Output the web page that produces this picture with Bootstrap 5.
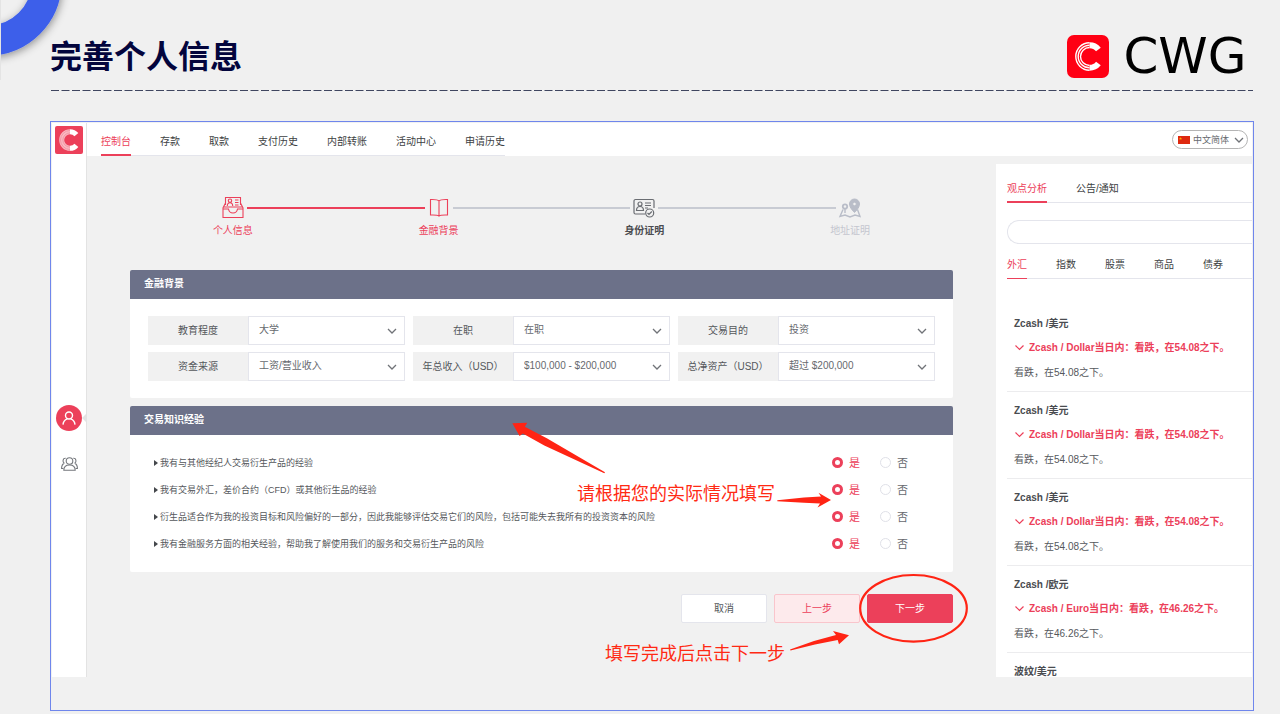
<!DOCTYPE html>
<html lang="zh-CN">
<head>
<meta charset="utf-8">
<meta name="viewport" content="width=device-width, initial-scale=1">
<title>完善个人信息</title>
<link href="https://cdn.jsdelivr.net/npm/bootstrap@5.3.0/dist/css/bootstrap.min.css" rel="stylesheet">
<style>
  :root { --brand: #ec405a; --slate: #6c7189; --rule: #e4e5ec; --ink: #55585c; }
  body { background: #f0f0f0; color: var(--ink); font: 10px/14px "Liberation Sans", "Noto Sans CJK SC", sans-serif; overflow-x: hidden; }
  a { color: inherit; text-decoration: none; }
  svg { display: block; flex: none; }

  /* slide header */
  .corner-ring { position: absolute; left: 0; top: 0; }
  .slide-head { padding: 32px 27px 0 50px; }
  .slide-title { font-size: 32px; line-height: 50px; font-weight: 700; color: #03053d; margin: 0; }
  .wordmark { font: 50px/48px "DejaVu Sans", sans-serif; color: #000; min-width: 136px; text-align: center; }
  .dash-rule { margin: 8px 27px 0 51px; width: calc(100% - 78px); }

  /* framed application */
  .frame { margin: 30px 26px 2px 50px; border: 1px solid #6f86ec; padding: 1px 1px 33px; background: #f1f1f1; }
  .side-rail { flex: 0 0 35px; background: #fff; border-right: 1px solid #e3e3e3; padding-top: 3px; }
  .rail-user { position: relative; width: 26px; height: 26px; border-radius: 50%; background: var(--brand); margin-top: 251px; }
  .rail-notch { position: absolute; right: -5px; top: 8px; }
  .rail-team { margin-top: 26px; }
  .top-bar { background: #fff; height: 33px; padding: 0 4px 0 14px; }

  .tab-strip { gap: 29px; border-bottom: 1px solid var(--rule); }
  .tab-strip a { display: block; color: #3d3f43; white-space: nowrap; }
  .tab-strip a.active { color: var(--brand); border-bottom: 2px solid var(--brand); margin-bottom: -1px; }
  .tabs-main a { padding: 12px 0 5px; }
  .tabs-news a { padding: 18px 0 5px; }
  .tabs-market a { padding: 14px 0 6px; }
  .tabs-market a.active { border-bottom-width: 1px; }

  .lang { border: 1px solid #b5b5b5; border-radius: 10px; height: 19px; padding: 0 3px 0 5px; margin-top: 7px; }
  .form-select { background-image: url("data:image/svg+xml,%3Csvg xmlns='http://www.w3.org/2000/svg' viewBox='0 0 10 10'%3E%3Cpath fill='none' stroke='%23707378' stroke-width='1.3' d='M1 3l4 4 4-4'/%3E%3C/svg%3E"); background-size: 10px 10px; border-radius: 0; box-shadow: none; font-size: 10px; line-height: 14px; color: #66696e; }
  .lang .form-select { border: 0; padding: 0 11px 0 3px; font-size: 9px; background-position: right 0 center; background-color: transparent; width: 54px; min-height: 0; }

  .main-col { padding: 0 43px 0; }

  /* steps */
  .steps { padding: 39px 0 0; }
  .step-row { margin-bottom: 3px; }
  .step-line { height: 2px; background: #c8cbd3; }
  .step-line.done { background: var(--brand); }
  .step-line.none { background: none; }
  .step-icon { width: 28px; height: 26px; }
  .step-on { color: var(--brand); }
  .step-now { color: #4a4c50; }
  .step-off { color: #c4c6cf; }

  /* panels */
  .panel-first { padding-top: 32px; }
  .panel-head { background: var(--slate); color: #fff; font-weight: 700; font-size: 10px; line-height: 15px; padding: 6px 14px 8px; margin: 0; border-radius: 2px 2px 0 0; }
  .panel-box { background: #fff; border-radius: 0 0 2px 2px; }
  .fields { display: grid; grid-template-columns: repeat(3, 1fr); gap: 7px 8px; padding: 17px 18px; }
  .field-name { flex: 0 0 100px; background: #f1f1f1; height: 29px; }
  .fields .form-select { height: 29px; padding: 0 24px 1px 10px; border: 1px solid var(--rule); background-position: right 7px center; }

  .questions { padding: 14px 45px 15px 24px; list-style: none; margin: 0; }
  .questions li { height: 27px; font-size: 9px; }
  .tri { width: 0; height: 0; border: solid transparent; border-width: 3px 0 3px 4px; border-left-color: #44474b; margin-right: 2px; flex: none; }
  .choice { gap: 6px; font-size: 11px; color: #66696e; }
  .choice .form-check-input { width: 11px; height: 11px; margin: 0; border: 1px solid #e0e1e8; background-color: #fff; box-shadow: none; }
  .choice .form-check-input:checked { border: 3px solid var(--brand); background: #fff; }
  .choice .form-check-input:checked + span { color: var(--brand); }

  .actions { gap: 7px; margin-top: 22px; }
  .actions .btn { width: 86px; height: 29px; padding: 0; font-size: 10px; line-height: 14px; border-radius: 2px; }
  .btn-cancel { background: #fff; border-color: var(--rule); color: #55585c; }
  .btn-prev { background: #fdeaec; border-color: #f9c5cc; color: var(--brand); }
  .btn-next, .btn-next:hover { background: var(--brand); border-color: var(--brand); color: #fff; }

  /* red notes laid over the form */
  .marks { position: absolute; right: -20px; top: 0; pointer-events: none; }
  .note { position: absolute; margin: 0; color: #ff2a14; font-size: 18px; line-height: 24px; white-space: nowrap; }
  .note-fill { right: 178px; top: 76px; }
  .note-done { right: 168px; top: 236px; }

  /* news column */
  .news { flex: 0 0 256px; background: #fff; margin-top: 8px; padding-left: 11px; }
  .search { height: 24px; border: 1px solid var(--rule); border-right: 0; margin-top: 17px; border-radius: 12px 0 0 12px; padding: 0 12px; font-size: 10px; box-shadow: none; }
  .news-list { max-height: 398px; overflow: hidden; padding: 26px 0 0; margin: 0; list-style: none; }
  .news-list li { height: 87px; padding: 12px 0 0 7px; border-bottom: 1px solid #ececee; }
  .news-list li:last-child { border: 0; }
  .news-list h3 { font-size: 10px; line-height: 14px; font-weight: 700; margin: 0 0 10px; color: #4a4c50; }
  .news-list .signal { font-weight: 700; color: var(--brand); margin: 0 0 11px; gap: 4px; white-space: nowrap; }
  .news-list p { margin: 0; }
</style>
</head>
<body>
<svg class="corner-ring" width="90" height="80" viewBox="0 0 90 80" aria-hidden="true">
  <defs><filter id="soft" x="-30%" y="-30%" width="160%" height="160%"><feDropShadow dx="1" dy="2" stdDeviation="4" flood-color="#000" flood-opacity=".4"/></filter></defs>
  <circle cx="-12" cy="-18" r="58.5" fill="none" stroke="#3c5eea" stroke-width="30" filter="url(#soft)"/>
  <path d="M.5 0v80" stroke="#e4e4e4"/>
</svg>

<header class="slide-head d-flex justify-content-between align-items-start">
  <h1 class="slide-title">完善个人信息</h1>
  <div class="d-flex align-items-center gap-2">
    <svg width="42" height="43" viewBox="0 0 42 43" role="img" aria-label="CWG">
      <rect width="42" height="43" rx="7" fill="#ff0014"/>
      <g fill="none" stroke="#fff">
        <path d="M22.500 7.800a13.700 13.700 0 0 0 0 27.400M22.500 10.200a11.300 11.300 0 0 0 0 22.600M22.500 12.500a9 9 0 0 0 0 18" stroke-width="1.400"/>
        <path d="M22.500 10.200a11.300 11.300 0 0 1 8.900 4.300M22.500 32.800a11.300 11.300 0 0 0 8.900-4.300" stroke-width="6"/>
      </g>
    </svg>
    <span class="wordmark">CWG</span>
  </div>
</header>
<svg class="dash-rule" height="1" aria-hidden="true"><line x1="0" y1=".5" x2="100%" y2=".5" stroke="#3f4660" stroke-width="1" stroke-dasharray="8 2.500"/></svg>

<div class="frame">
  <div class="d-flex">
    <aside class="side-rail d-flex flex-column align-items-center">
      <a href="#" aria-label="首页"><svg width="28" height="28" viewBox="0 0 28 28">
        <rect width="28" height="28" rx="2" fill="#ec405a"/>
        <g fill="none"><path d="M15 5.700a8.300 8.300 0 0 0 0 16.600" stroke="#f9b9c2" stroke-width="5"/>
        <path d="M15 4.500a9.500 9.500 0 0 0 0 19M15 6.900a7.100 7.100 0 0 0 0 14.200" stroke="#f08796" stroke-width=".7"/>
        <path d="M15 5.700a8.300 8.300 0 0 1 6.400 3M15 22.300a8.300 8.300 0 0 0 6.400-3" stroke="#fff" stroke-width="5"/></g>
      </svg></a>
      <a href="#" class="rail-user d-flex align-items-center justify-content-center" aria-label="个人">
        <svg width="14" height="14" viewBox="0 0 14 14" fill="none" stroke="#fff" stroke-width="1.400"><circle cx="7" cy="4.500" r="3.500"/><path d="M1 13.600c.2-3.400 2-5 4.300-5.800M13 13.600c-.2-3.400-2-5-4.300-5.800"/></svg>
        <svg class="rail-notch" width="5" height="10" viewBox="0 0 5 10"><path d="M5 0L0 5l5 5z" fill="#e3e3e3"/></svg>
      </a>
      <a href="#" class="rail-team" aria-label="团队">
        <svg width="17" height="14" viewBox="0 0 17 14" fill="none" stroke="#74777c" stroke-width="1.100"><circle cx="8.500" cy="4" r="3.300"/><path d="M2.800 13.300c0-3.500 2-5.300 5.700-5.300s5.700 1.800 5.700 5.300z"/><path d="M4.700 1.200c-3-.3-3.500 3.600-1.400 5M12.300 1.200c3-.3 3.500 3.600 1.400 5M3.300 6.300C1.500 7 .6 8.800.6 11.500h1.800M13.700 6.300c1.800.7 2.700 2.500 2.700 5.200h-1.800"/></svg>
      </a>
    </aside>

    <div class="flex-grow-1">
      <div class="top-bar d-flex justify-content-between align-items-start">
        <nav class="tab-strip tabs-main d-flex" aria-label="主导航">
          <a href="#" class="active">控制台</a><a href="#">存款</a><a href="#">取款</a><a href="#">支付历史</a><a href="#">内部转账</a><a href="#">活动中心</a><a href="#">申请历史</a>
        </nav>
        <label class="lang d-flex align-items-center">
          <svg width="12" height="8" viewBox="0 0 12 8"><path fill="#de2910" d="M0 0h12v8H0z"/><path fill="#ffb000" d="M2.500 1l.4 1.100h1.200l-1 .7.4 1.200-1-.7-1 .7.400-1.200-1-.7h1.200z"/></svg>
          <select class="form-select" aria-label="语言"><option>中文简体</option></select>
        </label>
      </div>

      <div class="d-flex align-items-start">
        <main class="main-col flex-grow-1">
          <ol class="steps list-unstyled d-flex mb-0 text-center">
            <li class="col step-on">
              <div class="step-row d-flex align-items-center">
                <span class="step-line none flex-fill"></span>
                <svg class="step-icon" viewBox="0 0 28 26" fill="none" stroke="currentColor" stroke-width="1.100"><path d="M6.500 10V2.500h15V10M6.500 8L4 13v9.500h20V13l-2.500-5M4 14h5.500c.5 3 1.500 4 4.500 4s4-1 4.500-4H24M4.500 12h19"/><circle cx="11" cy="5.700" r="1.700"/><path d="M8.300 11c0-2 1-3.300 2.700-3.300s2.700 1.300 2.700 3.300M16 5h3.500M16 7.500h3.500M16 10h3.500"/></svg>
                <span class="step-line done flex-fill"></span>
              </div>个人信息
            </li>
            <li class="col step-on">
              <div class="step-row d-flex align-items-center">
                <span class="step-line done flex-fill"></span>
                <svg class="step-icon" viewBox="0 0 28 26" fill="none" stroke="currentColor" stroke-width="1.100"><path d="M14 21V6c-1-1.200-3-1.700-8.500-1.500V20c5-.2 7.300 0 8.500 1 1.200-1 3.500-1.200 8.500-1V4.500C17 4.300 15 4.800 14 6"/></svg>
                <span class="step-line flex-fill"></span>
              </div>金融背景
            </li>
            <li class="col fw-bold step-now">
              <div class="step-row d-flex align-items-center">
                <span class="step-line flex-fill"></span>
                <svg class="step-icon" viewBox="0 0 28 26" fill="none" stroke="#6a6d72" stroke-width="1.200"><path d="M15 19H5.500a1.500 1.500 0 0 1-1.500-1.500V6a1.500 1.500 0 0 1 1.500-1.500h17A1.500 1.500 0 0 1 24 6v7M15 8h6M15 10.500h6M15 13h3"/><circle cx="10" cy="9" r="2"/><path d="M6.500 15.500c0-2.500 1.500-4 3.500-4s3.500 1.500 3.500 4zM17.500 18l1.500 1.500 2.800-3"/><circle cx="19.700" cy="18" r="4"/></svg>
                <span class="step-line flex-fill"></span>
              </div>身份证明
            </li>
            <li class="col step-off">
              <div class="step-row d-flex align-items-center">
                <span class="step-line flex-fill"></span>
                <svg class="step-icon" viewBox="0 0 28 26" fill="none" stroke="#b9bdc8"><path d="M18.500 17.500s-5-4.500-5-8.500a5 5 0 0 1 10 0c0 4-5 8.500-5 8.500z" fill="#b9bdc8"/><circle cx="18.500" cy="9" r="1.800" fill="#f1f1f1"/><circle cx="9" cy="11.500" r="2.200" stroke-width="1.800"/><path d="M9 14v4M7 14.500l-3 7 5-1.500 5 2 5-2 5 1.500-2.500-7" stroke-width="1.400"/></svg>
                <span class="step-line none flex-fill"></span>
              </div>地址证明
            </li>
          </ol>

          <section class="panel-first">
            <h2 class="panel-head">金融背景</h2>
            <div class="panel-box fields">
              <label class="d-flex"><span class="field-name d-flex align-items-center justify-content-center">教育程度</span><select class="form-select"><option>大学</option></select></label>
              <label class="d-flex"><span class="field-name d-flex align-items-center justify-content-center">在职</span><select class="form-select"><option>在职</option></select></label>
              <label class="d-flex"><span class="field-name d-flex align-items-center justify-content-center">交易目的</span><select class="form-select"><option>投资</option></select></label>
              <label class="d-flex"><span class="field-name d-flex align-items-center justify-content-center">资金来源</span><select class="form-select"><option>工资/营业收入</option></select></label>
              <label class="d-flex"><span class="field-name d-flex align-items-center justify-content-center">年总收入（USD）</span><select class="form-select"><option>$100,000 - $200,000</option></select></label>
              <label class="d-flex"><span class="field-name d-flex align-items-center justify-content-center">总净资产（USD）</span><select class="form-select"><option>超过 $200,000</option></select></label>
            </div>
          </section>

          <section class="position-relative mt-2">
            <h2 class="panel-head">交易知识经验</h2>
            <ul class="panel-box questions">
              <li class="d-flex align-items-center"><i class="tri"></i><span class="flex-grow-1">我有与其他经纪人交易衍生产品的经验</span>
                <label class="choice d-flex align-items-center"><input class="form-check-input" type="radio" name="q1" checked><span>是</span></label>
                <label class="choice d-flex align-items-center ms-3 ps-1"><input class="form-check-input" type="radio" name="q1"><span>否</span></label></li>
              <li class="d-flex align-items-center"><i class="tri"></i><span class="flex-grow-1">我有交易外汇，差价合约（CFD）或其他衍生品的经验</span>
                <label class="choice d-flex align-items-center"><input class="form-check-input" type="radio" name="q2" checked><span>是</span></label>
                <label class="choice d-flex align-items-center ms-3 ps-1"><input class="form-check-input" type="radio" name="q2"><span>否</span></label></li>
              <li class="d-flex align-items-center"><i class="tri"></i><span class="flex-grow-1">衍生品适合作为我的投资目标和风险偏好的一部分，因此我能够评估交易它们的风险，包括可能失去我所有的投资资本的风险</span>
                <label class="choice d-flex align-items-center"><input class="form-check-input" type="radio" name="q3" checked><span>是</span></label>
                <label class="choice d-flex align-items-center ms-3 ps-1"><input class="form-check-input" type="radio" name="q3"><span>否</span></label></li>
              <li class="d-flex align-items-center"><i class="tri"></i><span class="flex-grow-1">我有金融服务方面的相关经验，帮助我了解使用我们的服务和交易衍生产品的风险</span>
                <label class="choice d-flex align-items-center"><input class="form-check-input" type="radio" name="q4" checked><span>是</span></label>
                <label class="choice d-flex align-items-center ms-3 ps-1"><input class="form-check-input" type="radio" name="q4"><span>否</span></label></li>
            </ul>
            <div class="actions d-flex justify-content-end">
              <button type="button" class="btn btn-cancel">取消</button>
              <button type="button" class="btn btn-prev">上一步</button>
              <button type="button" class="btn btn-next">下一步</button>
            </div>
            <svg class="marks" width="470" height="250" viewBox="503 406 470 250" fill="#ff2414" aria-hidden="true">
              <path d="M512.300 423.300l15-.6-2.500 4 22 11.500L605 472.300l-.7 1-60-27.800-21.500-12-3.200 2.500z"/>
              <path d="M777.300 500.200L804 497.500l17-1-2.500-3.800L831 500l-13.500 7.500 2.500-4-16-.8-26.700-1.500z"/>
              <path d="M790 649.500l24-8.500 22-6-3-4 16 4.300-10 9-1.300-4.300-22.700 4.500-24.500 6z"/>
              <ellipse cx="913.500" cy="608.300" rx="53.300" ry="33.300" fill="none" stroke="#ff2414" stroke-width="2.200"/>
            </svg>
            <p class="note note-fill">请根据您的实际情况填写</p>
            <p class="note note-done">填写完成后点击下一步</p>
          </section>
        </main>

        <aside class="news">
          <nav class="tab-strip tabs-news d-flex" aria-label="资讯"><a href="#" class="active">观点分析</a><a href="#">公告/通知</a></nav>
          <input type="search" class="form-control search" aria-label="搜索">
          <nav class="tab-strip tabs-market d-flex" aria-label="市场"><a href="#" class="active">外汇</a><a href="#">指数</a><a href="#">股票</a><a href="#">商品</a><a href="#">债券</a></nav>
          <ul class="news-list">
            <li><h3>Zcash /美元</h3><p class="signal d-flex align-items-center"><svg width="11" height="8" viewBox="0 0 11 8" fill="none" stroke="currentColor" stroke-width="1.200"><path d="M1.500 1.500l4 4 4-4"/></svg>Zcash / Dollar当日内：看跌，在54.08之下。</p><p>看跌，在54.08之下。</p></li>
            <li><h3>Zcash /美元</h3><p class="signal d-flex align-items-center"><svg width="11" height="8" viewBox="0 0 11 8" fill="none" stroke="currentColor" stroke-width="1.200"><path d="M1.500 1.500l4 4 4-4"/></svg>Zcash / Dollar当日内：看跌，在54.08之下。</p><p>看跌，在54.08之下。</p></li>
            <li><h3>Zcash /美元</h3><p class="signal d-flex align-items-center"><svg width="11" height="8" viewBox="0 0 11 8" fill="none" stroke="currentColor" stroke-width="1.200"><path d="M1.500 1.500l4 4 4-4"/></svg>Zcash / Dollar当日内：看跌，在54.08之下。</p><p>看跌，在54.08之下。</p></li>
            <li><h3>Zcash /欧元</h3><p class="signal d-flex align-items-center"><svg width="11" height="8" viewBox="0 0 11 8" fill="none" stroke="currentColor" stroke-width="1.200"><path d="M1.500 1.500l4 4 4-4"/></svg>Zcash / Euro当日内：看跌，在46.26之下。</p><p>看跌，在46.26之下。</p></li>
            <li><h3>波纹/美元</h3></li>
          </ul>
        </aside>
      </div>
    </div>
  </div>
</div>
<script src="https://cdn.jsdelivr.net/npm/bootstrap@5.3.0/dist/js/bootstrap.bundle.min.js"></script>
</body>
</html>
